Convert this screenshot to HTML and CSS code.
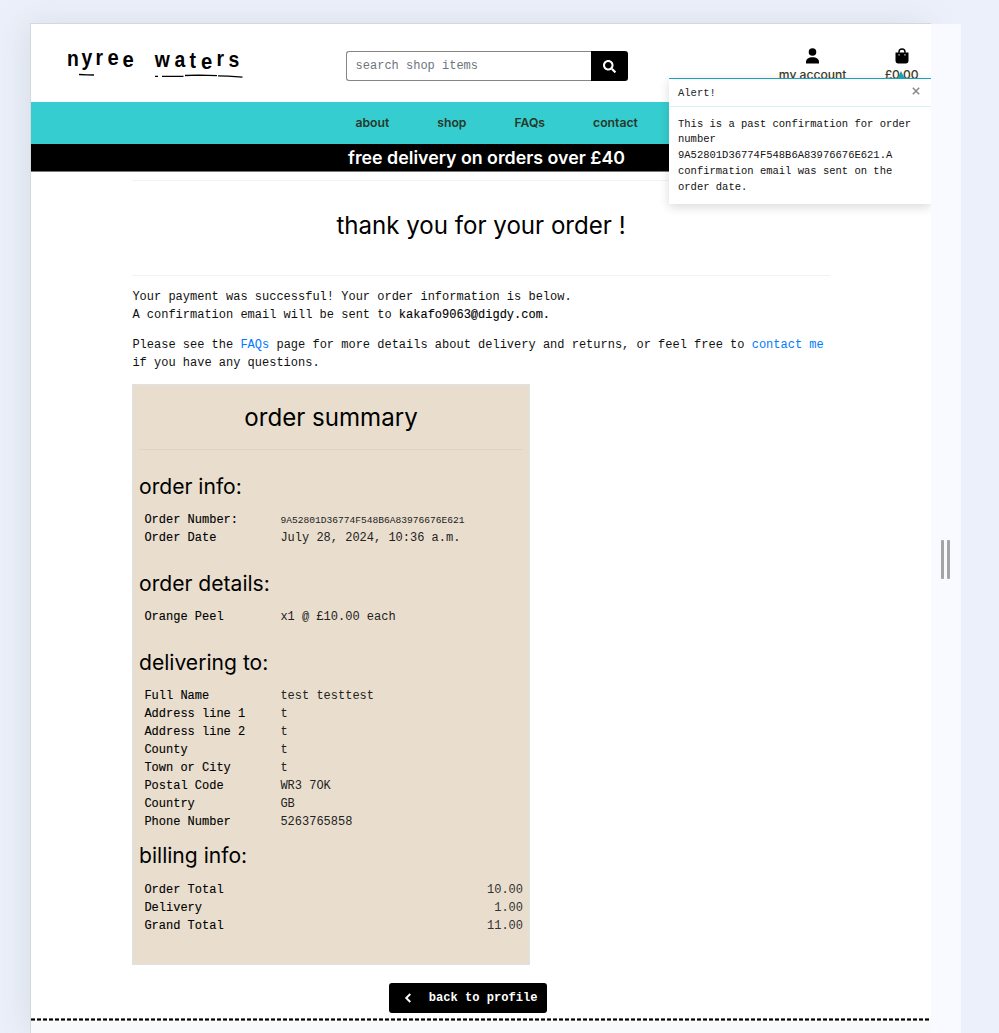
FILE: index.html
```html
<!DOCTYPE html>
<html lang="en">
<head>
<meta charset="utf-8">
<title>nyree waters - thank you for your order</title>
<link rel="stylesheet" href="styles.css">
</head>
<body>
<div class="stage">
  <div class="device">
    <header class="top">
      <svg class="logo" viewBox="0 0 180 40" width="180" height="40" role="img" aria-label="nyree waters">
        <g class="logo-letters">
          <text transform="translate(1 21.5) scale(.86 1)">n</text>
          <text transform="translate(15.500 20.8) scale(.86 1)">y</text>
          <text transform="translate(29.500 21.2) scale(.86 1)">r</text>
          <text transform="translate(41.500 20.8) scale(.9 1)">e</text>
          <text transform="translate(56.500 22.5) scale(.9 1)">e</text>
          <text transform="translate(88.800 22.5) scale(.86 1)">w</text>
          <text transform="translate(108.500 22.5) scale(.86 1)">a</text>
          <text transform="translate(123.500 24) scale(.86 1)">t</text>
          <text transform="translate(135 24.8) scale(.9 1)">e</text>
          <text transform="translate(150.500 22) scale(.86 1)">r</text>
          <text transform="translate(162.500 22.6) scale(.86 1)">s</text>
        </g>
        <path d="M13 30.500l8 .3 7 .2M89 32.300h3M96 32.300h21.500M119 31.500l14-.3 18 .4M152 31.900l10 .3 14.500 .9" fill="none" stroke="#000" stroke-width="1.300"/>
      </svg>
      <form class="search">
        <input class="search-input" type="text" placeholder="search shop items">
        <button class="search-btn" type="button" aria-label="search">
          <svg viewBox="0 0 512 512" width="13" height="13"><path fill="#fff" d="M505 442.700L405.300 343c-4.500-4.500-10.600-7-17-7H372c27.600-35.300 44-79.700 44-128C416 93.100 322.900 0 208 0S0 93.100 0 208s93.100 208 208 208c48.300 0 92.700-16.400 128-44v16.300c0 6.400 2.500 12.500 7 17l99.700 99.700c9.400 9.400 24.600 9.400 33.900 0l28.300-28.300c9.400-9.400 9.400-24.600.1-34zM208 336c-70.700 0-128-57.200-128-128 0-70.700 57.200-128 128-128 70.700 0 128 57.200 128 128 0 70.700-57.200 128-128 128z"/></svg>
        </button>
      </form>
      <div class="account">
        <svg viewBox="0 0 13 16" width="13" height="16"><circle cx="6.500" cy="4" r="3.800"/><path d="M0 15.500V14c0-3 2.500-4.700 6.500-4.700S13 11 13 14v1.500z"/></svg>
        <span>my account</span>
      </div>
      <div class="bag">
        <svg viewBox="0 0 14 16" width="14" height="16"><path d="M4 6V4a3 3 0 0 1 6 0v2" fill="none" stroke="#000" stroke-width="1.400"/><path d="M.5 4.600h13v8.400a2.400 2.400 0 0 1-2.400 2.400H2.900A2.400 2.400 0 0 1 .5 13z"/><path d="M3.500 6.200h1.100v1.200H3.500zM9.400 6.200h1.100v1.200H9.400z" fill="#fff"/></svg>
        <span>£0.00</span>
      </div>
    </header>
    <nav class="nav"><a>about</a><a>shop</a><a>FAQs</a><a>contact</a></nav>
    <div class="promo">free delivery on orders over £40</div>
    <main class="main">
      <hr class="rule">
      <h1 class="title">thank you for your order !</h1>
      <hr class="rule">
      <p class="para">Your payment was successful! Your order information is below.<br>A confirmation email will be sent to <span class="strong">kakafo9063@digdy.com.</span></p>
      <p class="para">Please see the <a class="link">FAQs</a> page for more details about delivery and returns, or feel free to <a class="link">contact me</a><br>if you have any questions.</p>
      <section class="summary">
        <h2 class="summary-title">order summary</h2>
        <hr class="summary-rule">
        <h3 class="group">order info:</h3>
        <dl class="rows">
          <dt>Order Number:</dt><dd class="small">9A52801D36774F548B6A83976676E621</dd>
          <dt>Order Date</dt><dd>July 28, 2024, 10:36 a.m.</dd>
        </dl>
        <h3 class="group">order details:</h3>
        <dl class="rows"><dt>Orange Peel</dt><dd>x1 @ £10.00 each</dd></dl>
        <h3 class="group">delivering to:</h3>
        <dl class="rows">
          <dt>Full Name</dt><dd>test testtest</dd>
          <dt>Address line 1</dt><dd>t</dd>
          <dt>Address line 2</dt><dd>t</dd>
          <dt>County</dt><dd>t</dd>
          <dt>Town or City</dt><dd>t</dd>
          <dt>Postal Code</dt><dd>WR3 7OK</dd>
          <dt>Country</dt><dd>GB</dd>
          <dt>Phone Number</dt><dd>5263765858</dd>
        </dl>
        <h3 class="group billing">billing info:</h3>
        <dl class="rows totals">
          <dt>Order Total</dt><dd>10.00</dd>
          <dt>Delivery</dt><dd>1.00</dd>
          <dt>Grand Total</dt><dd>11.00</dd>
        </dl>
      </section>
      <button class="back" type="button">
        <svg viewBox="0 0 8 10" width="8" height="10"><path d="M6.300 1L2.200 5l4.100 4" fill="none" stroke="#fff" stroke-width="1.900"/></svg>
        <span>back to profile</span>
      </button>
    </main>
    <footer class="footer"><svg class="dashes" width="900" height="3"><path d="M0 1.500H900" stroke="#666" stroke-width="3" stroke-dasharray="4 2"/><path d="M0 1.500H900" stroke="#000" stroke-width="1" stroke-dasharray="4 2"/></svg></footer>
    <aside class="toast">
      <i class="arrow"></i>
      <div class="toast-head"><span>Alert!</span><svg viewBox="0 0 8 8" width="8" height="8"><path d="M.8 .8l6.400 6.400M7.200 .8L.8 7.200" stroke="#888" stroke-width="1.500"/></svg></div>
      <div class="toast-body">This is a past confirmation for order number<br>9A52801D36774F548B6A83976676E621.A confirmation email was sent on the order date.</div>
    </aside>
  </div>
  <div class="handle"><i></i><i></i></div>
</div>
</body>
</html>
```
FILE: styles.css
```css
* { box-sizing: border-box; }
body { margin: 0; background: #ecf0fa; color: #111; font: 12px/18px "Liberation Mono", "Courier New", monospace; }
h1, h2, h3, p, dl, dd { margin: 0; font-weight: 400; }
h1, h2, h3 { font-family: Inter, sans-serif; color: #000; }
hr { margin: 0; border: 0; }
.stage { display: flex; padding: 23px 0 0 30px; height: 1033px; overflow: hidden; }
.device { position: relative; width: 901px; height: 1010px; flex: none; display: flex; flex-direction: column; background: #fff; border: 1px solid #d5d8dc; border-width: 1px 0 0 1px; box-shadow: -5px 0 30px rgba(190, 202, 210, .45); }
.handle { z-index: 1; width: 30px; height: 1009px; flex: none; margin-top: 1px; padding: 516px 0 0 10px; background: #f8faff; display: flex; gap: 3px; }
.handle i { width: 3px; height: 39px; border-radius: 1px; background: #a4a4a4; }
.top { height: 78px; display: flex; flex: none; }
.logo { margin: 20px 0 0 35px; flex: none; }
.logo-letters { font: bold 22.5px "Liberation Sans", sans-serif; }
.search { width: 282px; height: 30px; margin: 27px 0 0 99.6px; display: flex; flex: none; }
.search-input { width: 245px; min-width: 0; padding: 0 9px; border: 1px solid #858585; border-right: 0; border-radius: 3px 0 0 3px; font: 12px "Liberation Mono", monospace; }
.search-input::placeholder { color: #6c757d; opacity: 1; }
.search-btn { width: 37px; padding: 0; border: 0; border-radius: 0 3px 3px 0; background: #000; display: grid; place-items: center; }
.account, .bag { padding-top: 24px; display: flex; flex-direction: column; align-items: center; flex: none; font: 500 12.1px/15px Inter, sans-serif; color: #403b28; }
.account { width: 80px; margin-left: 145px; }
.bag { width: 40px; margin-left: 29px; }
.account span, .bag span { margin-top: 3px; }
.nav { height: 42px; flex: none; padding-left: 324.5px; display: flex; align-items: center; gap: 48px; background: #35cdcf; color: #28382a; font: 600 12.2px/18px Inter, sans-serif; }
.promo { height: 28px; flex: none; padding-left: 11px; background: #000; border-bottom: 1px solid #777; color: #fff; text-align: center; font: 600 17.8px/27px Inter, sans-serif; }
.main { width: 698px; height: 846px; margin-left: 101px; padding-top: 8px; flex: none; display: flex; flex-direction: column; }
.rule { height: 1px; background: #f2f2f2; flex: none; }
.title { height: 94px; padding-top: 27px; text-align: center; font-size: 24.1px; line-height: 36px; }
.para { margin-top: 12px; padding-left: .4px; white-space: nowrap; }
.strong, dt { color: #000; -webkit-text-stroke: .12px #000; }
.link { color: #007bff; }
.summary { width: 398px; height: 581px; margin-top: 12px; padding: 0 6px; border: 1px solid #dee2e6; background: #e9dece; flex: none; display: flex; flex-direction: column; }
.summary-title { height: 64px; padding-top: 15px; text-align: center; font-size: 24.1px; line-height: 36px; }
.summary-rule { height: 1px; flex: none; background: #dfd5c6; }
.group { margin-top: 21px; padding-bottom: 8px; font-size: 21.1px; line-height: 32px; }
.billing { margin-top: 9px; padding-bottom: 9px; }
.rows { display: grid; grid-template-columns: 136px 1fr; padding-left: 5.4px; }
.rows dd { color: #222; }
.rows .small { font-size: 9.6px; padding-top: 1px; line-height: 17px; }
.totals dd { text-align: right; color: #333; }
.back { width: 158px; height: 30px; margin: 18px 0 0 256.5px; padding: 0 9px 0 15px; flex: none; display: flex; align-items: center; justify-content: space-between; border: 0; border-radius: 3px; background: #000; color: #fff; font: bold 12.1px "Liberation Mono", monospace; white-space: nowrap; }
.footer { flex: 1; background: #f8f9fb; }
.dashes { display: block; }
.toast { position: absolute; left: 638px; top: 54px; width: 262px; height: 126px; border-top: 1px solid #17a2b8; background: #fff; box-shadow: 0 3px 10px rgba(0, 0, 0, .15); font-size: 10.500px; line-height: 15.750px; }
.arrow { position: absolute; left: 228px; top: -8px; border: 4px solid transparent; border-top: 0; border-bottom: 8px solid #17a2b8; }
.toast-head { height: 28px; padding: 7px 11px 0 9px; display: flex; justify-content: space-between; border-bottom: 1px solid #d5f1f3; color: #212529; }
.toast-head svg { margin-top: 1px; }
.toast-body { padding: 9.6px 9px; }
```
